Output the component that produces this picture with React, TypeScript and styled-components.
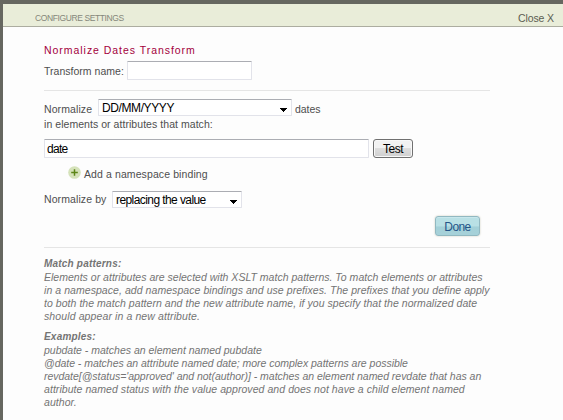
import React from "react";
import styled, { createGlobalStyle } from "styled-components";

const GlobalStyle = createGlobalStyle`
  * { box-sizing: border-box; }
  body {
    margin: 0;
    overflow: hidden;
    background: #fdfdfd;
    font-family: "Liberation Sans", Arial, sans-serif;
  }
`;

const Panel = styled.div`
  width: 563px;
  height: 420px;
  overflow: hidden;
  background: #fdfdfd;
  border-top: 4px solid #666760;
  border-left: 3px solid #666760;
`;

const Header = styled.header`
  height: 23px;
  display: flex;
  justify-content: space-between;
  padding: 0 9px 0 32px;
  background: #e9edd9;
  border-bottom: 1px solid #acada0;
`;

const Caption = styled.span`
  padding-top: 8px;
  font-size: 8.5px;
  line-height: 12px;
  letter-spacing: -0.39px;
  color: #858779;
`;

const Close = styled.a`
  padding-top: 8px;
  font-size: 10.5px;
  line-height: 13px;
  letter-spacing: -0.1px;
  color: #5b5d52;
`;

const Body = styled.main`
  width: 446px;
  margin-left: 41px;
`;

const Title = styled.h1`
  margin: 0;
  padding-top: 16px;
  height: 34px;
  font-size: 10.5px;
  font-weight: 400;
  line-height: 14px;
  letter-spacing: 0.96px;
  color: #a3003c;
`;

const Row = styled.div<{ $h: number; $indent?: number }>`
  display: flex;
  height: ${(p) => p.$h}px;
  padding-left: ${(p) => p.$indent ?? 0}px;
`;

const Label = styled.span<{ $w?: number; $top?: number; $ls?: number }>`
  flex: none;
  width: ${(p) => (p.$w ? `${p.$w}px` : "auto")};
  padding-top: ${(p) => p.$top ?? 0}px;
  font-size: 10.5px;
  line-height: 13px;
  letter-spacing: ${(p) => p.$ls ?? 0.1}px;
  white-space: nowrap;
  color: #4e4e4e;
`;

const Input = styled.input<{ $w: number }>`
  width: ${(p) => p.$w}px;
  height: 19px;
  padding: 0 0 0 2px;
  border: 1px solid #e2e3ea;
  border-top-color: #abadb3;
  border-radius: 1px;
  outline: none;
  background: #fff;
  font: 12px "Liberation Sans", Arial, sans-serif;
  letter-spacing: -0.7px;
  color: #000;
`;

const Select = styled.div<{ $w: number; $top?: number; $ls: number }>`
  display: flex;
  justify-content: space-between;
  width: ${(p) => p.$w}px;
  height: 17px;
  margin-top: ${(p) => p.$top ?? 0}px;
  padding: 0 4px 0 3px;
  border: 1px solid #e2e3ea;
  border-top-color: #abadb3;
  border-radius: 1px;
  background: #fff;
  font-size: 12px;
  line-height: 16px;
  letter-spacing: ${(p) => p.$ls}px;
  color: #000;
  white-space: nowrap;
`;

const Arrow = styled.svg`
  width: 7px;
  height: 4px;
  margin-top: 8px;
`;

const TestButton = styled.button`
  width: 40px;
  height: 19px;
  margin-left: 4px;
  padding: 2px 0 0;
  border: 1px solid #707070;
  border-radius: 3px;
  box-shadow: inset 0 0 0 1px #f8f8f8;
  background: linear-gradient(#f2f2f2 0 48%, #dedede 50%, #cfcfcf);
  font: 12px/15px "Liberation Sans", Arial, sans-serif;
  letter-spacing: -0.5px;
  color: #000;
`;

const DoneButton = styled.button`
  width: 45px;
  height: 20px;
  margin-left: auto;
  margin-right: 10px;
  padding: 3px 0 0;
  border: 1px solid #91b8c1;
  border-radius: 3px;
  box-shadow: 0 0 2px #c8c8b8, inset 0 1px #c8e7ec;
  background: linear-gradient(#b9e0e5 0 50%, #a3d0d8 55%, #a6d1d9);
  font: 12px/15px "Liberation Sans", Arial, sans-serif;
  letter-spacing: -0.6px;
  color: #245588;
`;

const Rule = styled.div`
  height: 1px;
  background: #e5e5e5;
`;

const Help = styled.section`
  padding-top: 9px;
  font-size: 10.5px;
  font-style: italic;
  line-height: 13px;
  color: #747474;
`;

const HelpTitle = styled.h2<{ $gap?: number }>`
  margin: ${(p) => p.$gap ?? 0}px 0 1px;
  font-size: 10px;
  font-weight: 700;
  line-height: 13px;
  letter-spacing: 0.2px;
`;

const HelpLine = styled.div<{ $ls: number }>`
  letter-spacing: ${(p) => p.$ls}px;
  white-space: nowrap;
`;

const AddIcon = styled.svg`
  width: 13px;
  height: 13px;
  margin-right: 3px;
`;

const DownArrow = () => (
  <Arrow viewBox="0 0 7 4" shapeRendering="crispEdges">
    <path d="M0 0h7v1H6v1H5v1H4v1H3V3H2V2H1V1H0z" fill="#000" />
  </Arrow>
);

const patternLines: [string, number][] = [
  ["Elements or attributes are selected with XSLT match patterns. To match elements or attributes", 0.015],
  ["in a namespace, add namespace bindings and use prefixes. The prefixes that you define apply", 0.06],
  ["to both the match pattern and the new attribute name, if you specify that the normalized date", 0.045],
  ["should appear in a new attribute.", 0.11],
];

const exampleLines: [string, number][] = [
  ["pubdate - matches an element named pubdate", 0],
  ["@date - matches an attribute named date; more complex patterns are possible", -0.03],
  ["revdate[@status='approved' and not(author)] - matches an element named revdate that has an", -0.03],
  ["attribute named status with the value approved and does not have a child element named", 0.06],
  ["author.", 0.06],
];

export default function App() {
  return (
    <>
      <GlobalStyle />
      <Panel>
        <Header>
          <Caption>CONFIGURE SETTINGS</Caption>
          <Close>Close X</Close>
        </Header>
        <Body>
          <Title>Normalize Dates Transform</Title>
          <Row $h={29}>
            <Label $w={83} $top={4} $ls={0.02}>Transform name:</Label>
            <Input $w={125} aria-label="Transform name" />
          </Row>
          <Rule />
          <Row $h={26}>
            <Label $w={54} $top={12}>Normalize</Label>
            <Select $w={194} $top={8} $ls={-0.4}>DD/MM/YYYY<DownArrow /></Select>
            <Label $top={12} $ls={0}>&nbsp;dates</Label>
          </Row>
          <Row $h={22}>
            <Label $top={1} $ls={0.05}>in elements or attributes that match:</Label>
          </Row>
          <Row $h={27}>
            <Input $w={325} defaultValue="date" aria-label="Match pattern" />
            <TestButton>Test</TestButton>
          </Row>
          <Row $h={25} $indent={24}>
            <AddIcon viewBox="0 0 13 13">
              <circle cx="6.5" cy="6.5" r="6.3" fill="#d5e2ba" />
              <path d="M6.5 3.2v6.6M3.2 6.5h6.6" stroke="#5c8517" strokeWidth="1.5" />
            </AddIcon>
            <Label $top={2}>Add a namespace binding</Label>
          </Row>
          <Row $h={25}>
            <Label $w={68} $top={2}>Normalize by</Label>
            <Select $w={130} $ls={-0.58}>replacing the value<DownArrow /></Select>
          </Row>
          <Row $h={31}>
            <DoneButton>Done</DoneButton>
          </Row>
          <Rule />
          <Help>
            <HelpTitle>Match patterns:</HelpTitle>
            {patternLines.map(([text, ls]) => (
              <HelpLine key={text} $ls={ls}>{text}</HelpLine>
            ))}
            <HelpTitle $gap={7}>Examples:</HelpTitle>
            {exampleLines.map(([text, ls]) => (
              <HelpLine key={text} $ls={ls}>{text}</HelpLine>
            ))}
          </Help>
        </Body>
      </Panel>
    </>
  );
}
